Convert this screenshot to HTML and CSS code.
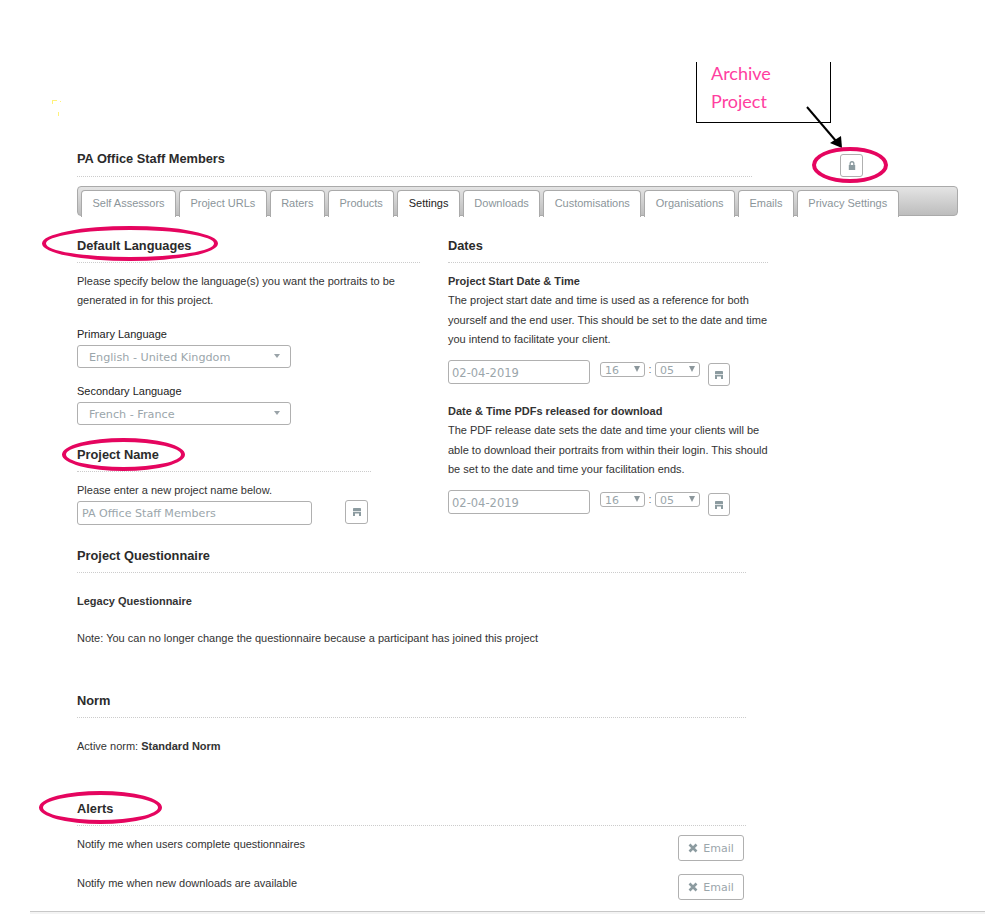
FILE: index.html
```html
<!DOCTYPE html>
<html lang="en">
<head>
    <meta charset="UTF-8">
    <title>Project Settings</title>
    <link rel="stylesheet" href="styles.css">
</head>
<body>
    <div class="page">
        <div class="title-row">
            <h1 class="title">PA Office Staff Members</h1>
            <button class="icon-btn lock-btn">
                <svg width="8" height="9" viewBox="0 0 8 9"><path d="M1.500 4V2.600a2.500 2.500 0 0 1 5 0V4H7.200V9H.8V4zM2.800 4h2.400V2.600a1.200 1.200 0 0 0-2.400 0z" fill="#8c9ba0" fill-rule="evenodd"/></svg>
            </button>
        </div>

        <div class="tabs">
            <a class="tab">Self Assessors</a>
            <a class="tab">Project URLs</a>
            <a class="tab">Raters</a>
            <a class="tab">Products</a>
            <a class="tab active">Settings</a>
            <a class="tab">Downloads</a>
            <a class="tab">Customisations</a>
            <a class="tab">Organisations</a>
            <a class="tab">Emails</a>
            <a class="tab">Privacy Settings</a>
        </div>

        <div class="columns">
            <div class="col-left">
                <h2 class="heading">Default Languages</h2>
                <p class="text intro">Please specify below the language(s) you want the portraits to be generated in for this project.</p>
                <label class="field-label">Primary Language</label>
                <div class="select"><span>English - United Kingdom</span><i class="caret"></i></div>
                <label class="field-label second">Secondary Language</label>
                <div class="select"><span>French - France</span><i class="caret"></i></div>

                <h2 class="heading name-heading">Project Name</h2>
                <p class="text name-hint">Please enter a new project name below.</p>
                <div class="name-row">
                    <input class="input name-input" type="text" value="PA Office Staff Members">
                    <button class="icon-btn name-save">
                        <svg width="8" height="8" viewBox="0 0 8 8"><path d="M0 .8A.8.8 0 0 1 .8 0h6.400a.8.8 0 0 1 .8.800V3H0zM0 3.800h8V8H6V5.500H2V8H0z" fill="#8c9ba0"/></svg>
                    </button>
                </div>
            </div>

            <div class="col-right">
                <h2 class="heading">Dates</h2>
                <p class="text intro"><b>Project Start Date &amp; Time</b><br>The project start date and time is used as a reference for both yourself and the end user. This should be set to the date and time you intend to facilitate your client.</p>
                <div class="date-row">
                    <input class="input date-input" type="text" value="02-04-2019">
                    <div class="mini-select"><span>16</span><i class="arrow"></i></div>
                    <span class="colon">:</span>
                    <div class="mini-select"><span>05</span><i class="arrow"></i></div>
                    <button class="icon-btn date-save">
                        <svg width="8" height="8" viewBox="0 0 8 8"><path d="M0 .8A.8.8 0 0 1 .8 0h6.400a.8.8 0 0 1 .8.800V3H0zM0 3.800h8V8H6V5.500H2V8H0z" fill="#8c9ba0"/></svg>
                    </button>
                </div>
                <p class="text release"><b>Date &amp; Time PDFs released for download</b><br>The PDF release date sets the date and time your clients will be able to download their portraits from within their login. This should be set to the date and time your facilitation ends.</p>
                <div class="date-row">
                    <input class="input date-input" type="text" value="02-04-2019">
                    <div class="mini-select"><span>16</span><i class="arrow"></i></div>
                    <span class="colon">:</span>
                    <div class="mini-select"><span>05</span><i class="arrow"></i></div>
                    <button class="icon-btn date-save">
                        <svg width="8" height="8" viewBox="0 0 8 8"><path d="M0 .8A.8.8 0 0 1 .8 0h6.400a.8.8 0 0 1 .8.800V3H0zM0 3.800h8V8H6V5.500H2V8H0z" fill="#8c9ba0"/></svg>
                    </button>
                </div>
            </div>
        </div>

        <div class="wide">
            <h2 class="heading">Project Questionnaire</h2>
            <p class="text legacy"><b>Legacy Questionnaire</b></p>
            <p class="text note">Note: You can no longer change the questionnaire because a participant has joined this project</p>

            <h2 class="heading norm-heading">Norm</h2>
            <p class="text active-norm">Active norm: <b>Standard Norm</b></p>

            <h2 class="heading alerts-heading">Alerts</h2>
            <div class="alert-row first">
                <span class="text">Notify me when users complete questionnaires</span>
                <button class="email-btn"><svg width="10" height="10" viewBox="0 0 10 10"><path d="M1.500 1.500l7 7M8.500 1.500l-7 7" stroke="#8c9ba0" stroke-width="2.600"/></svg>Email</button>
            </div>
            <div class="alert-row">
                <span class="text">Notify me when new downloads are available</span>
                <button class="email-btn"><svg width="10" height="10" viewBox="0 0 10 10"><path d="M1.500 1.500l7 7M8.500 1.500l-7 7" stroke="#8c9ba0" stroke-width="2.600"/></svg>Email</button>
            </div>
        </div>
    </div>
    <div class="footer-line"></div>

    <!-- annotations drawn over the screenshot -->
    <div class="note-box"><span>Archive</span><span>Project</span></div>
    <svg class="note-arrow" width="40" height="46" viewBox="0 0 40 46">
        <path d="M1 1L30 35" stroke="#000" stroke-width="2"/>
        <path d="M36 42L24 37L35 30z" fill="#000"/>
    </svg>
    <svg class="specks" width="12" height="20" viewBox="0 0 12 20"><path d="M0 0h5v1H1v3H0zM8 1h1v1H8zM6 12h1v4H6z" fill="#fff27a"/></svg>
    <div class="ring ring-lock"></div>
    <div class="ring ring-lang"></div>
    <div class="ring ring-name"></div>
    <div class="ring ring-alerts"></div>
</body>
</html>
```

FILE: styles.css
```css
html, body {
    margin: 0;
    padding: 0;
    background: #fff;
}
body {
    font-family: 'Liberation Sans', Arial, sans-serif;
    font-size: 11px;
    color: #222;
    height: 914px;
    overflow: hidden;
    position: relative;
}
.page {
    padding: 150px 27px 0 77px;
}
.title-row {
    display: flex;
    align-items: flex-start;
    width: 786px;
    justify-content: space-between;
}
.title {
    width: 675px;
    height: 26px;
    margin: 0;
    font-size: 12.8px;
    line-height: 17px;
    font-weight: bold;
    color: #2b2b2b;
    border-bottom: 1px dotted #ccc;
}
.icon-btn {
    width: 23px;
    height: 24px;
    padding: 0;
    display: flex;
    align-items: center;
    justify-content: center;
    background: #fff;
    border: 1px solid #b0b0b0;
    border-radius: 3px;
}
.lock-btn {
    height: 23px;
    margin-top: 4px;
}
.tabs {
    display: flex;
    gap: 3px;
    box-sizing: border-box;
    height: 30px;
    margin-top: 9px;
    padding: 3px 3px 0;
    background: linear-gradient(#e4e4e4, #bdbdbd);
    border: 1px solid #aaa;
    border-radius: 4px;
}
.tab {
    display: block;
    padding: 0 10.45px;
    height: 26px;
    line-height: 25px;
    color: #8b959a;
    background: #fff;
    border: 1px solid #aaa;
    border-bottom: 0;
    border-radius: 4px 4px 0 0;
}
.tab.active {
    color: #222;
}
.columns {
    display: flex;
}
.col-left {
    width: 343px;
    margin-right: 28px;
}
.col-right {
    width: 320px;
}
.heading {
    margin: 0;
    padding-top: 21px;
    height: 25px;
    font-size: 12.8px;
    line-height: 17px;
    font-weight: bold;
    color: #2b2b2b;
    border-bottom: 1px dotted #ccc;
}
.text {
    margin: 0;
    font-size: 11px;
    line-height: 19.5px;
    color: #333;
}
.intro {
    margin-top: 8.5px;
}
.field-label {
    display: block;
    margin-top: 14.5px;
    height: 20px;
    line-height: 19px;
}
.field-label.second {
    margin-top: 14px;
}
.select {
    display: flex;
    align-items: center;
    justify-content: space-between;
    box-sizing: border-box;
    width: 214px;
    height: 23px;
    padding: 1px 10px 0 11px;
    font-family: 'DejaVu Sans', sans-serif;
    font-size: 11.2px;
    color: #9ba6ab;
    border: 1px solid #b0b0b0;
    border-radius: 3px;
}
.caret {
    width: 0;
    height: 0;
    margin-bottom: 3px;
    border: 3.5px solid transparent;
    border-top: 4px solid #9aa3a8;
    border-bottom: 0;
}
.input {
    box-sizing: border-box;
    height: 24px;
    padding: 0 4px;
    font-family: 'DejaVu Sans', sans-serif;
    font-size: 11.1px;
    color: #9ba6ab;
    background: #fff;
    border: 1px solid #b0b0b0;
    border-radius: 3px;
}
.name-heading {
    width: 294px;
}
.name-hint {
    margin-top: 9px;
    height: 20px;
}
.name-row {
    display: flex;
    gap: 33px;
}
.name-input {
    width: 235px;
}
.name-save {
    margin-top: -1px;
}
.date-row {
    display: flex;
    align-items: flex-start;
    margin-top: 10.5px;
}
.date-input {
    width: 142px;
    margin-right: 10px;
    padding: 2px 4px 0 3px;
    font-size: 11.5px;
}
.mini-select {
    display: flex;
    align-items: center;
    justify-content: space-between;
    box-sizing: border-box;
    width: 45px;
    height: 15px;
    margin-top: 2px;
    padding: 1px 4px 0;
    font-family: 'DejaVu Sans', sans-serif;
    font-size: 11px;
    color: #9ba6ab;
    border: 1px solid #b0b0b0;
    border-radius: 3px;
}
.arrow {
    width: 0;
    height: 0;
    margin-bottom: 2px;
    border: 3.5px solid transparent;
    border-top: 6px solid #8c979c;
    border-bottom: 0;
}
.colon {
    width: 10px;
    margin-top: 1px;
    line-height: 17px;
    text-align: center;
    color: #777;
}
.date-save {
    width: 22px;
    height: 23px;
    margin: 3px 0 0 8px;
}
.release {
    margin-top: 15.5px;
}
.wide {
    width: 669px;
    margin-top: 1px;
}
.legacy {
    margin-top: 19px;
}
.note {
    margin-top: 17px;
}
.norm-heading {
    padding-top: 44px;
}
.active-norm {
    margin-top: 19px;
}
.alerts-heading {
    padding-top: 43.5px;
}
.alert-row {
    display: flex;
    justify-content: space-between;
    align-items: flex-start;
    height: 39px;
    padding-right: 2px;
}
.alert-row.first {
    margin-top: 9px;
}
.email-btn {
    display: flex;
    align-items: center;
    justify-content: center;
    gap: 5px;
    box-sizing: border-box;
    width: 66px;
    height: 26px;
    padding: 0;
    font-family: 'DejaVu Sans', sans-serif;
    font-size: 11px;
    color: #9ba6ab;
    background: #fff;
    border: 1px solid #b0b0b0;
    border-radius: 3px;
}
.footer-line {
    position: absolute;
    left: 30px;
    right: 0;
    top: 911px;
    height: 3px;
    background: #f4f4f4;
    border-top: 1px solid #c8c8c8;
}
.note-box {
    position: absolute;
    left: 696px;
    top: 62px;
    box-sizing: border-box;
    width: 135px;
    height: 61px;
    padding: 0 0 7px 14px;
    display: flex;
    flex-direction: column;
    justify-content: flex-end;
    font-family: Lato, sans-serif;
    font-size: 18px;
    line-height: 28px;
    color: #ff3ea0;
    border: 1px solid #000;
    border-top: 0;
}
.note-arrow {
    position: absolute;
    left: 806px;
    top: 106px;
}
.specks {
    position: absolute;
    left: 52px;
    top: 100px;
}
.ring {
    position: absolute;
    box-sizing: border-box;
    border: 4px solid #e5055f;
    border-radius: 50%;
}
.ring-lock {
    left: 812px;
    top: 147px;
    width: 76px;
    height: 36px;
}
.ring-lang {
    left: 42px;
    top: 226px;
    width: 176px;
    height: 35px;
}
.ring-name {
    left: 62px;
    top: 438px;
    width: 123px;
    height: 33px;
}
.ring-alerts {
    left: 39px;
    top: 791px;
    width: 123px;
    height: 33px;
}
```
